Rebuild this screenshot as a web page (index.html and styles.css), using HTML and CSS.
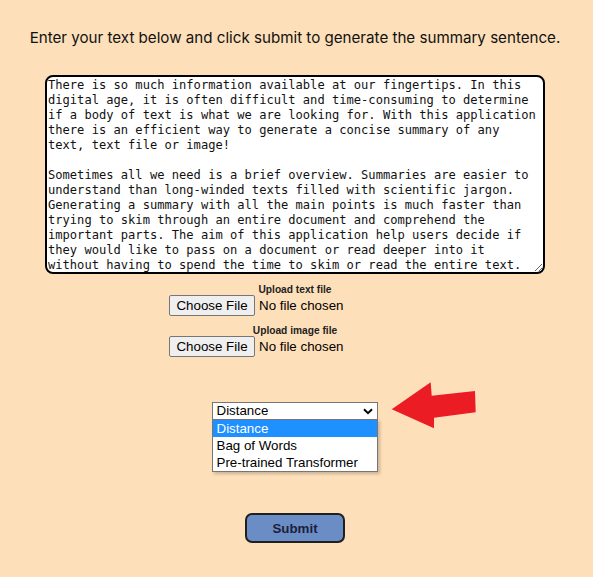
FILE: index.html
```html
<!DOCTYPE html>
<html lang="en">
<head>
<meta charset="utf-8">
<title>Summary Generator</title>
<link rel="stylesheet" href="styles.css">
</head>
<body>
<main class="page">
  <p class="intro">Enter your text below and click submit to generate the summary sentence.</p>
  <textarea class="text-input" spellcheck="false">There is so much information available at our fingertips. In this
digital age, it is often difficult and time-consuming to determine
if a body of text is what we are looking for. With this application
there is an efficient way to generate a concise summary of any
text, text file or image!

Sometimes all we need is a brief overview. Summaries are easier to
understand than long-winded texts filled with scientific jargon.
Generating a summary with all the main points is much faster than
trying to skim through an entire document and comprehend the
important parts. The aim of this application help users decide if
they would like to pass on a document or read deeper into it
without having to spend the time to skim or read the entire text.</textarea>

  <div class="uploads">
    <div class="upload">
      <label class="upload-label" for="textfile">Upload text file</label>
      <input class="file" id="textfile" type="file">
    </div>
    <div class="upload">
      <label class="upload-label" for="imagefile">Upload image file</label>
      <input class="file" id="imagefile" type="file">
    </div>
  </div>

  <div class="method">
    <div class="select-wrap">
      <div class="select">
        <span>Distance</span>
        <svg class="chevron" width="10" height="7" viewBox="0 0 10 7"><path d="M1 1.2 L5 5.2 L9 1.2" fill="none" stroke="#000" stroke-width="2"/></svg>
      </div>
      <ul class="listbox">
        <li class="option selected">Distance</li>
        <li class="option">Bag of Words</li>
        <li class="option">Pre-trained Transformer</li>
      </ul>
      <svg class="arrow" width="90" height="52" viewBox="0 0 90 52"><polygon points="2.7,29.3 41.7,2.3 42.7,15.7 86,11 86.7,32.3 45,37.7 45,48.3" fill="#ec1c24"/></svg>
    </div>
  </div>

  <div class="actions">
    <button class="submit" type="button">Submit</button>
  </div>
</main>
</body>
</html>
```

FILE: styles.css
```css
html, body {
  margin: 0;
  padding: 0;
}

body {
  background: #fddfb9;
  width: 593px;
  min-height: 577px;
  font-family: "Liberation Sans", Arial, sans-serif;
  color: #000;
}

.page {
  display: flex;
  flex-direction: column;
  align-items: center;
  padding-top: 29px;
}

.intro {
  margin: 0 0 0 -3px;
  font-family: Inter, "Noto Sans", sans-serif;
  font-size: 15.15px;
  line-height: 18px;
  color: #111;
  text-align: center;
}

.text-input {
  display: block;
  box-sizing: border-box;
  width: 500px;
  height: 199px;
  margin: 28px 0 0 -3px;
  padding: 1px;
  border: 2px solid #000;
  border-radius: 8px;
  background: #fff;
  font-family: "DejaVu Sans Mono", "Liberation Mono", monospace;
  font-size: 12.1px;
  line-height: 15px;
  color: #111;
  overflow: hidden;
  white-space: pre;
  resize: both;
  outline: none;
}

.uploads {
  display: flex;
  flex-direction: column;
  align-items: center;
  gap: 9px;
  margin-top: 10px;
}

.upload {
  display: flex;
  flex-direction: column;
  align-items: center;
}

.upload-label {
  margin-left: -3px;
  font-family: "Liberation Sans", Arial, sans-serif;
  font-weight: bold;
  font-size: 10.2px;
  line-height: 11px;
  height: 11px;
  color: #222;
}

.file {
  width: 255px;
  height: 21px;
  margin: 0;
  padding: 0;
  font-family: "Liberation Sans", Arial, sans-serif;
  font-size: 13.33px;
  color: #000;
}

.file::file-selector-button {
  box-sizing: border-box;
  width: 86px;
  height: 21px;
  margin: 0 4px 0 0;
  padding: 1px 0;
  border: 1px solid #767676;
  border-radius: 2px;
  background: #efefef;
  font-family: "Liberation Sans", Arial, sans-serif;
  font-size: 13.33px;
  color: #000;
}

.method {
  margin-top: 45px;
  display: flex;
  justify-content: center;
}

.select-wrap {
  position: relative;
  width: 166px;
  margin-left: -4px;
}

.select {
  box-sizing: border-box;
  height: 18px;
  display: flex;
  align-items: center;
  justify-content: space-between;
  padding: 0 4px 0 4px;
  border: 1px solid #767676;
  background: #fff;
  font-size: 13.33px;
  line-height: 16px;
}

.chevron {
  display: block;
}

.listbox {
  position: absolute;
  top: 17px;
  left: 0;
  box-sizing: border-box;
  width: 166px;
  margin: 0;
  padding: 0;
  list-style: none;
  background: #fff;
  border: 1px solid #767676;
  box-shadow: 2px 2px 3px rgba(0, 0, 0, 0.2);
}

.option {
  height: 17px;
  padding: 0 4px;
  font-size: 13.33px;
  line-height: 17px;
  color: #000;
}

.option.selected {
  background: #1e90ff;
  color: #fff;
}

.arrow {
  position: absolute;
  left: 177px;
  top: -22px;
}

.actions {
  margin-top: 93px;
  display: flex;
  justify-content: center;
}

.submit {
  box-sizing: border-box;
  width: 100px;
  height: 30px;
  margin-left: -3px;
  border: 2px solid #1f1f1f;
  border-radius: 7px;
  background: #6b8dc6;
  font-family: "Liberation Sans", Arial, sans-serif;
  font-weight: bold;
  font-size: 13.33px;
  color: #1b1f3b;
  padding: 0;
}
```
